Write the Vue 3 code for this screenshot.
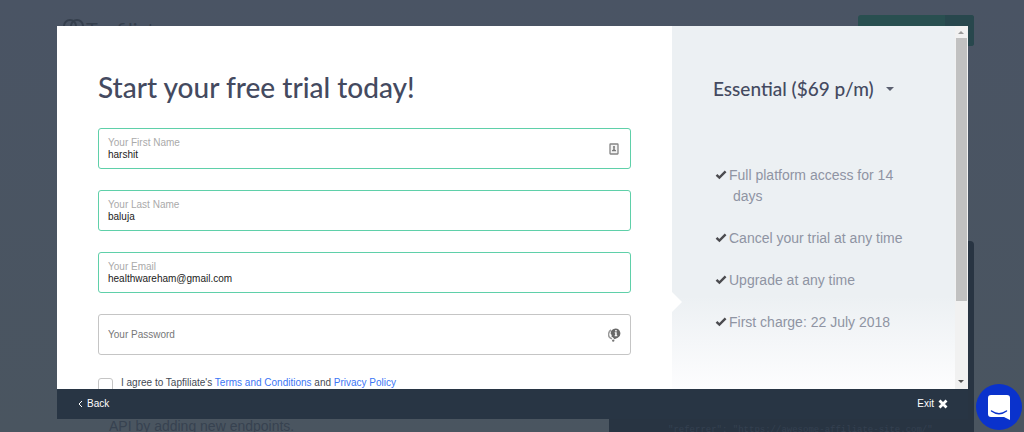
<script setup>
import { ref } from 'vue'

const fields = ref([
  { id: 'first-name', label: 'Your First Name', value: 'harshit', type: 'text', icon: 'contact' },
  { id: 'last-name', label: 'Your Last Name', value: 'baluja', type: 'text' },
  { id: 'email', label: 'Your Email', value: 'healthwareham@gmail.com', type: 'email' }
])
const password = ref('')
const agreed = ref(false)
const plan = ref('essential')
const features = [
  'Full platform access for 14 days',
  'Cancel your trial at any time',
  'Upgrade at any time',
  'First charge: 22 July 2018'
]
</script>

<template>
  <div class="screen">
    <div class="page" aria-hidden="true">
      <div class="page-header">
        <div class="brand">
          <svg width="21" height="18" viewBox="0 0 21 18" fill="none" stroke="currentColor" stroke-width="2">
            <circle cx="7" cy="8" r="6" />
            <circle cx="14" cy="8" r="6" />
          </svg>
          <span>Tapfiliate</span>
        </div>
        <div class="cta"><span class="cta-end"></span></div>
      </div>
      <div class="page-content">
        <p class="page-copy">API by adding new endpoints.</p>
        <pre class="code">"referrer": "https://awesome-affiliate-site.com/"</pre>
      </div>
    </div>

    <section class="modal" role="dialog" aria-labelledby="trial-title">
      <div class="modal-body">
        <form class="signup" @submit.prevent>
          <h1 id="trial-title">Start your free trial today!</h1>
          <div class="fields">
            <div v-for="f in fields" :key="f.id" class="field valid">
              <div class="field-text">
                <label :for="f.id">{{ f.label }}</label>
                <input :id="f.id" v-model="f.value" :type="f.type" />
              </div>
              <svg v-if="f.icon" class="contact-icon" width="10" height="12" viewBox="0 0 10 12">
                <rect x="1" y="1" width="8" height="10" rx="0.5" fill="#f4f4f4" stroke="#858585" stroke-width="1.3" />
                <circle cx="5" cy="4" r="1.1" fill="#777" />
                <path d="M4.3 5h1.4v1.5l1.3.8v.9H3v-.9l1.3-.8z" fill="#777" />
              </svg>
            </div>
            <div class="field">
              <input id="password" v-model="password" type="password" placeholder="Your Password" aria-label="Your Password" />
              <svg class="key-icon" width="13" height="14" viewBox="0 0 13 14">
                <path d="M3 2C.4 3.600 0 7 1.300 9c.7 1 1.600 1.500 2.700 1.700" fill="none" stroke="#999" stroke-width="1.500" />
                <path d="M7.600.5a4.900 4.900 0 0 1 2.200 9.200L6.500 11.200 5 9.600 3.400 8.500 3.800 7 2.700 5.900A4.900 4.900 0 0 1 7.600.5z" fill="#696969" />
                <path d="M7.200 2h1.500v1.400H7.200zM6.700 4.200h2v3h.6v1H6.600v-1h.6v-2h-.5z" fill="#fff" />
                <circle cx="5.200" cy="12.600" r="1.200" fill="#777" />
              </svg>
            </div>
          </div>
          <div class="terms">
            <input id="agree" v-model="agreed" type="checkbox" />
            <label for="agree">I agree to Tapfiliate's <a href="#terms">Terms and Conditions</a> and <a href="#privacy">Privacy Policy</a></label>
          </div>
        </form>

        <aside class="plan">
          <div class="plan-picker">
            <select v-model="plan" aria-label="Plan">
              <option value="essential">Essential ($69 p/m)</option>
            </select>
            <svg width="8" height="4" viewBox="0 0 8 4"><path d="M0 0h8L4 4z" fill="#5b6070" /></svg>
          </div>
          <ul>
            <li v-for="text in features" :key="text">
              <svg width="12" height="10" viewBox="0 0 12 10"><path d="M1.500 4.800 4.400 7.600 10.600 1.400" fill="none" stroke="#4b4b4f" stroke-width="2.400" /></svg>{{ text }}
            </li>
          </ul>
        </aside>

        <div class="scrollbar" aria-hidden="true">
          <svg width="12" height="12" viewBox="0 0 12 12"><path d="M3 8h6L6 5z" fill="#9a9a9a" /></svg>
          <div class="track"><div class="thumb"></div></div>
          <svg width="12" height="14" viewBox="0 0 12 14"><path d="M3 5h6L6 8z" fill="#505050" /></svg>
        </div>
      </div>

      <footer>
        <button type="button">
          <svg width="5" height="8" viewBox="0 0 5 8"><path d="M4 1 1 4l3 3" fill="none" stroke="#fff" stroke-width="1" /></svg>
          Back
        </button>
        <button type="button" class="exit">
          Exit
          <svg width="10" height="10" viewBox="0 0 10 10"><path d="M1.500 1.500l7 7M8.500 1.500l-7 7" stroke="#fff" stroke-width="2.800" /></svg>
        </button>
      </footer>
    </section>

    <button class="chat" type="button" aria-label="Open chat">
      <svg width="22" height="25" viewBox="0 0 22 25">
        <path d="M3 0h16a3 3 0 0 1 3 3v22l-6-3H3a3 3 0 0 1-3-3V3a3 3 0 0 1 3-3z" fill="#fff" />
        <path d="M3.500 16c4.500 3.500 10.500 3.500 15 0" fill="none" stroke="#0a32cc" stroke-width="1.500" stroke-linecap="round" />
      </svg>
    </button>
  </div>
</template>

<style>
body {
  background: #4a5461;
}
</style>

<style scoped>
.screen {
  position: relative;
  height: 100vh;
  overflow: hidden;
  font-family: "Liberation Sans", Arial, sans-serif;
  box-sizing: border-box;
  padding: 26px 56px 13px 57px;
}
.screen * {
  box-sizing: border-box;
}
.page {
  position: absolute;
  inset: 0;
  display: flex;
  flex-direction: column;
  justify-content: space-between;
  padding: 15px 50px 0 63px;
  background: linear-gradient(#4a5464, #4a5560);
}
.page-header {
  display: flex;
  justify-content: space-between;
}
.brand {
  display: flex;
  align-items: flex-start;
  gap: 2px;
  padding-top: 3px;
  color: #353f4d;
  font: 20px/22px Lato, sans-serif;
}
.cta {
  display: flex;
  justify-content: flex-end;
  width: 116px;
  height: 31px;
  border-radius: 3px;
  overflow: hidden;
  background: #294f50;
}
.cta-end {
  width: 29px;
  background: #28474d;
}
.page-content {
  display: flex;
  justify-content: space-between;
  align-items: flex-end;
}
.page-copy {
  margin: 0 0 -4px 46px;
  color: #374250;
  font-size: 14px;
  line-height: 20px;
}
.code {
  width: 365px;
  height: 191px;
  margin: 0;
  padding: 182px 0 0 59px;
  overflow: hidden;
  border-radius: 4px 4px 0 0;
  background: #283442;
  color: #344050;
  font: 9px/14px "Liberation Mono", monospace;
}
.modal {
  position: relative;
  display: flex;
  flex-direction: column;
  height: 100%;
}
.modal-body {
  display: flex;
  flex: 1;
  min-height: 0;
  overflow: hidden;
  background: #fff;
}
.signup {
  flex: 1;
  padding: 42px 41px 0;
}
h1 {
  margin: 0 0 22px;
  color: #444a60;
  font: 500 28px/38px Lato, sans-serif;
  white-space: nowrap;
}
.fields {
  display: grid;
  gap: 21px;
}
.field {
  display: flex;
  align-items: center;
  justify-content: space-between;
  height: 41px;
  padding: 0 9px;
  border: 1px solid #c5c5c5;
  border-radius: 3px;
}
.field.valid {
  border-color: #5fd0a9;
}
.field-text {
  display: flex;
  flex: 1;
  flex-direction: column;
}
.field label {
  color: #aaa;
  font-size: 10px;
  line-height: 12px;
}
.field input {
  flex: 1;
  width: 100%;
  padding: 0;
  border: 0;
  outline: 0;
  background: none;
  color: #222;
  font: 10px/12px "Liberation Sans", Arial, sans-serif;
}
.field-text input {
  flex: none;
  height: 12px;
}
.field input::placeholder {
  color: #777;
}
.contact-icon {
  margin-right: 2px;
}
.terms {
  display: flex;
  gap: 8px;
  margin-top: 22px;
  color: #444a55;
  font-size: 10px;
  line-height: 12px;
}
.terms input {
  appearance: none;
  width: 15px;
  height: 15px;
  margin: 1px 0 0;
  border: 1px solid #c5c5c5;
  border-radius: 3px;
}
.terms a {
  color: #3b76f6;
  text-decoration: none;
}
.plan {
  position: relative;
  width: 283px;
  padding: 48px 41px 0;
  background: linear-gradient(#ecf0f3 0, #ecf0f3 270px, #fdfdfe 100%);
}
.plan::before {
  content: "";
  position: absolute;
  left: 0;
  top: 266px;
  border: 10px solid transparent;
  border-left-color: #fff;
  border-right-width: 0;
}
.plan-picker {
  display: flex;
  align-items: center;
  gap: 12px;
}
.plan select {
  appearance: none;
  padding: 0;
  border: 0;
  background: none;
  color: #444a60;
  font: 500 19px/30px Lato, sans-serif;
}
.plan ul {
  display: grid;
  gap: 21px;
  margin: 61px 0 0;
  padding: 0;
  list-style: none;
}
.plan li {
  padding-left: 20px;
  color: #8f94a3;
  font-size: 14px;
  line-height: 21px;
  text-indent: -18px;
}
.plan li svg {
  margin-right: 2px;
}
.scrollbar {
  display: flex;
  flex-direction: column;
  width: 13px;
  background: #f1f1f1;
}
.track {
  flex: 1;
  padding: 0 1px;
}
.thumb {
  height: 78%;
  background: #c1c1c1;
}
footer {
  display: flex;
  align-items: center;
  justify-content: space-between;
  height: 30px;
  padding: 0 20px 0 21px;
  background: #283544;
}
footer button {
  display: flex;
  align-items: center;
  gap: 4px;
  padding: 0;
  border: 0;
  background: none;
  color: #fff;
  font: 10px/14px "Liberation Sans", Arial, sans-serif;
}
.chat {
  position: absolute;
  right: 2px;
  bottom: 2px;
  display: grid;
  place-items: center;
  width: 46px;
  height: 46px;
  padding: 0;
  border: 0;
  border-radius: 50%;
  background: #0a32cc;
}
</style>
